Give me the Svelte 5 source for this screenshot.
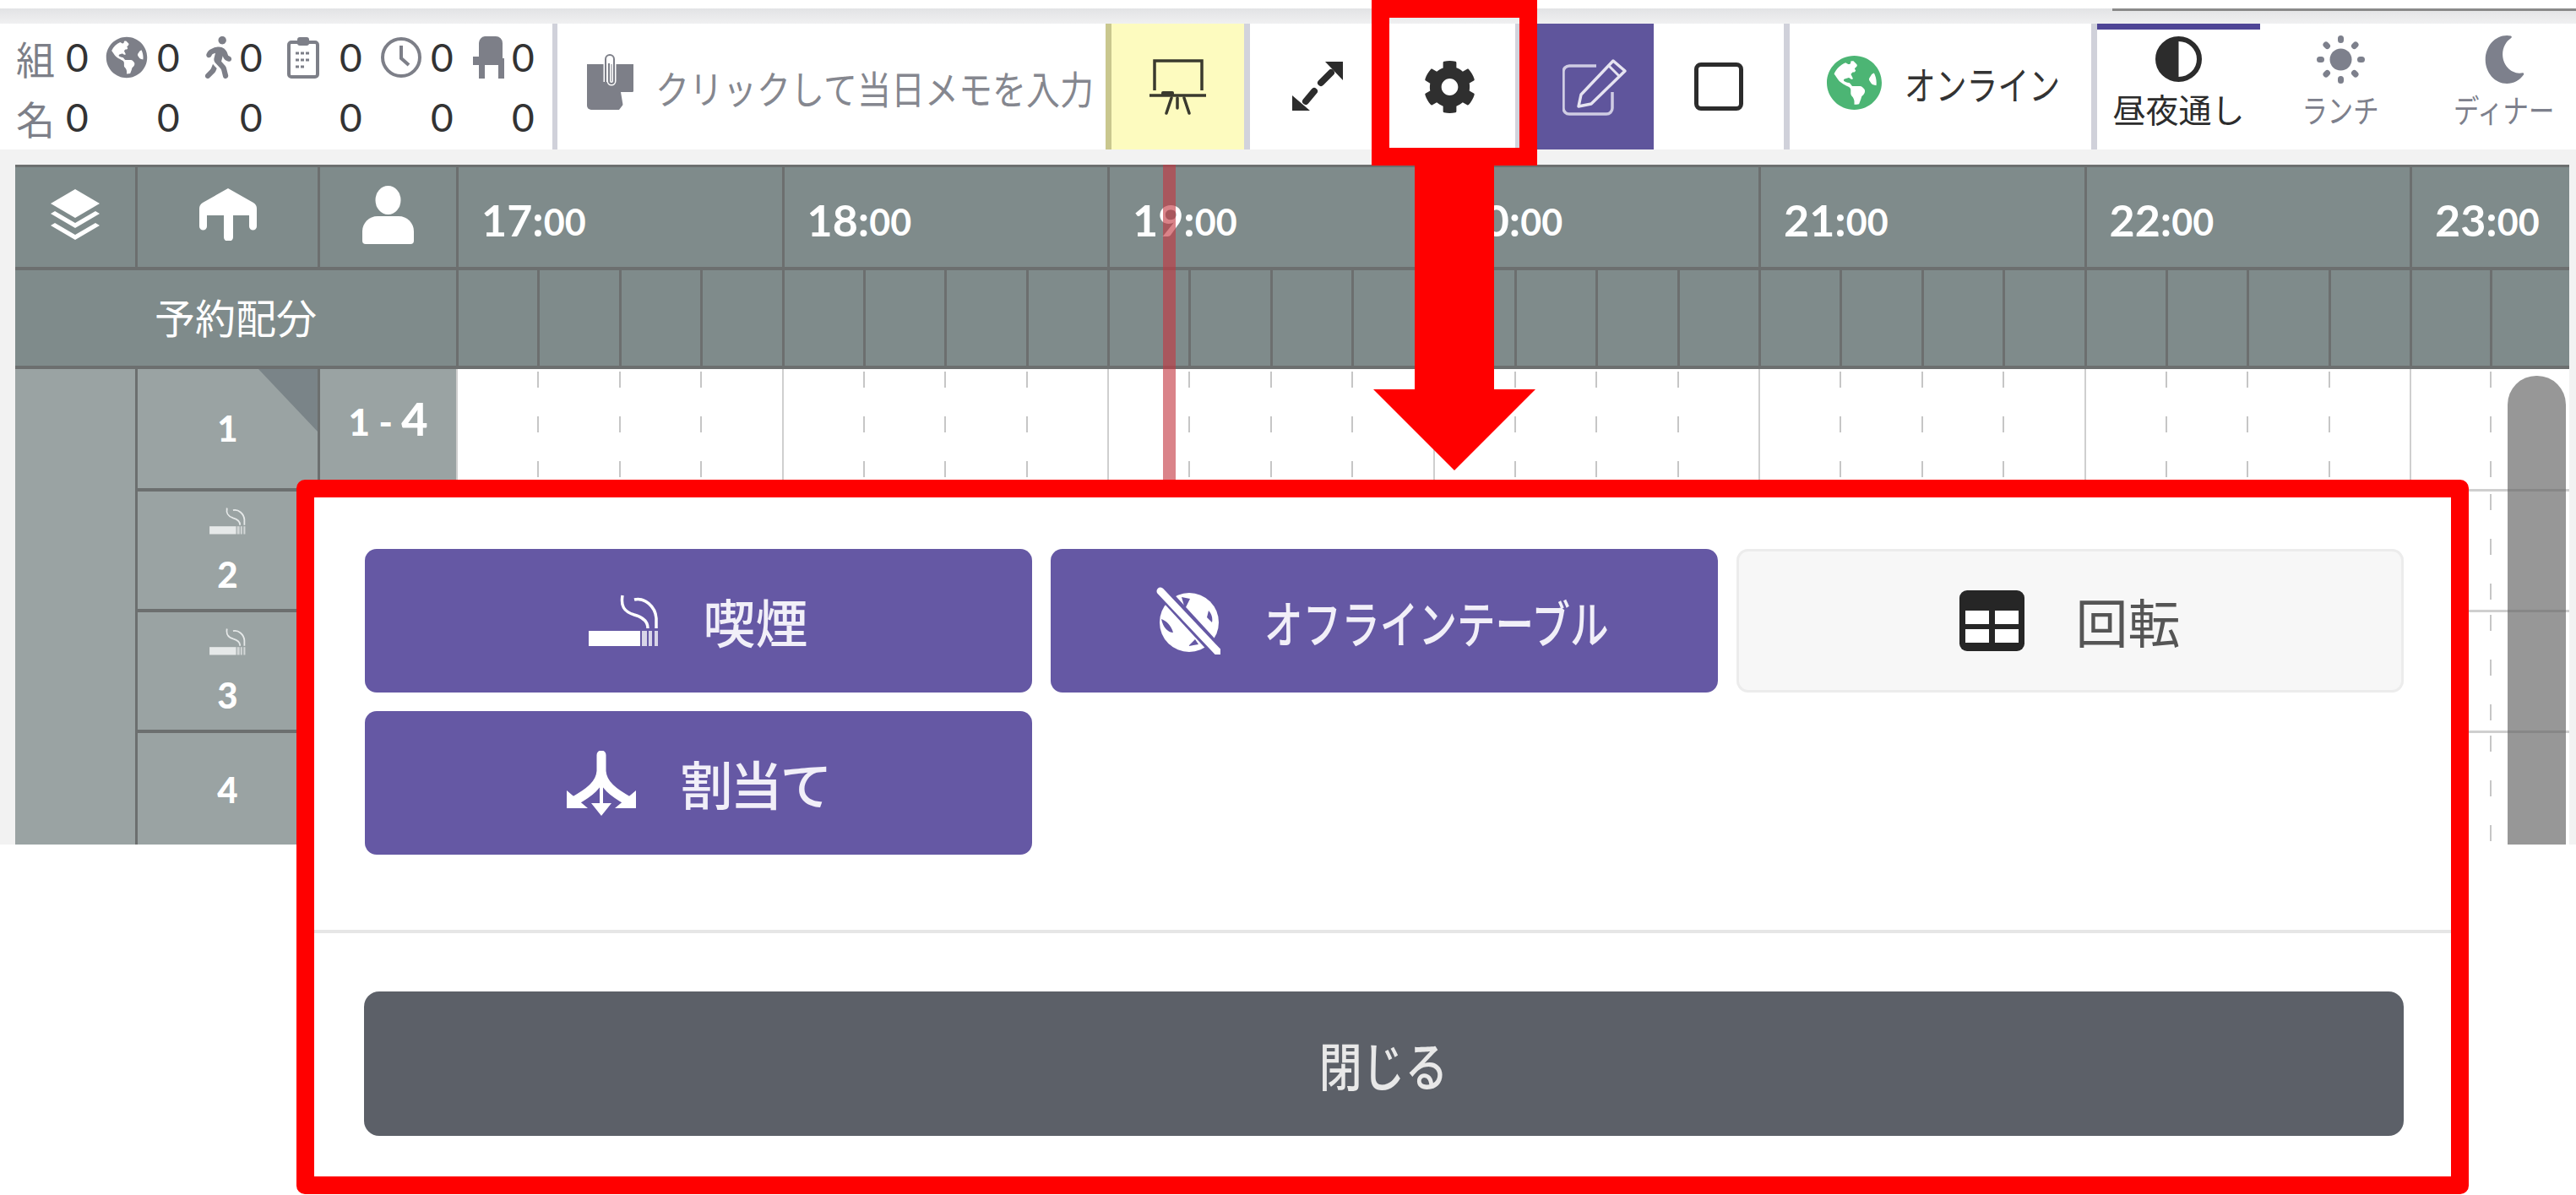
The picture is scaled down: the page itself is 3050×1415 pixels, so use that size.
<script>
  const globe = "M248 8C111.03 8 0 119.03 0 256s111.03 248 248 248 248-111.03 248-248S384.97 8 248 8zm82.29 357.6c-3.9 3.88-7.99 7.95-11.31 11.28-2.99 3-5.1 6.7-6.17 10.71-1.51 5.66-2.73 11.38-4.77 16.87l-17.39 46.85c-13.76 3-28 4.69-42.65 4.69v-27.38c1.69-12.62-7.64-36.26-22.63-51.25-6-6-9.37-14.14-9.37-22.63v-32.01c0-11.64-6.27-22.34-16.46-27.97-14.37-7.95-34.81-19.06-48.81-26.11-11.48-5.78-22.1-13.14-31.65-21.75l-.8-.72a114.792 114.792 0 0 1-18.06-20.74c-9.38-13.77-24.66-36.42-34.59-51.14 20.47-45.5 57.36-82.04 103.2-101.89l24.01 12.01C203.48 89.74 216 82.01 216 70.11v-11.3c7.99-1.29 16.12-2.11 24.42-2.43l28.3 28.3c6.25 6.25 6.25 16.38 0 22.63L264 112l-10.34 10.34c-3.12 3.12-3.12 8.19 0 11.31l4.69 4.69c3.12 3.12 3.12 8.19 0 11.31l-8 8a8.008 8.008 0 0 1-5.66 2.34h-8.99c-2.08 0-4.08.81-5.58 2.27l-9.92 9.65a8.008 8.008 0 0 0-1.58 9.31l15.59 31.19c2.66 5.32-1.21 11.58-7.15 11.58h-5.64c-1.93 0-3.79-.7-5.24-1.96l-9.28-8.06a16.017 16.017 0 0 0-15.55-3.1l-31.17 10.39a11.95 11.95 0 0 0-8.17 11.34c0 4.53 2.56 8.66 6.61 10.69l11.08 5.54c9.41 4.71 19.79 7.16 30.31 7.16s22.59 27.29 32 32h66.75c8.49 0 16.62 3.37 22.63 9.37l13.69 13.69a30.503 30.503 0 0 1 8.93 21.57 46.536 46.536 0 0 1-13.72 32.98zM417 274.25c-5.79-1.45-10.84-5-14.15-9.97l-17.98-26.97a23.97 23.97 0 0 1 0-26.62l19.59-29.38c2.32-3.47 5.5-6.29 9.24-8.15l12.98-6.49C440.2 193.59 448 223.87 448 256c0 8.67-.74 17.16-1.82 25.54L417 274.25z";
  const walker = "M208 96c26.5 0 48-21.5 48-48S234.5 0 208 0s-48 21.5-48 48 21.5 48 48 48zm94.5 149.1l-23.3-11.8-9.7-29.4c-14.7-44.6-55.7-75.8-102.2-75.9-36-.1-55.9 10.1-93.3 25.2-21.6 8.7-39.3 25.2-49.7 46.2L17.6 213c-7.8 15.8-1.5 35 14.2 42.9 15.6 7.9 34.6 1.5 42.5-14.3L81 228c3.5-7 9.3-12.5 16.5-15.4l26.8-10.8-15.2 60.7c-5.2 20.8.4 42.9 14.9 58.8l59.9 65.4c7.2 7.9 12.3 17.4 14.9 27.7l18.3 73.3c4.3 17.1 21.7 27.6 38.8 23.3 17.1-4.3 27.6-21.7 23.3-38.8l-22.2-89c-2.6-10.3-7.7-19.9-14.9-27.7l-45.5-49.7 17.2-68.7 5.5 16.5c5.3 16.1 16.7 29.4 31.7 37l23.3 11.8c15.6 7.9 34.6 1.5 42.5-14.3 7.7-15.7 1.4-35.1-14.3-43zM73.6 385.8c-3.2 8.1-8 15.4-14.2 21.5l-50 50.1c-12.5 12.5-12.5 32.8 0 45.3s32.7 12.5 45.2 0l59.4-59.4c6.1-6.1 10.9-13.4 14.2-21.5l13.5-33.8c-55.3-60.3-38.7-41.8-47.4-53.7l-20.7 51.5z";
  const cog = "M487.4 315.7l-42.6-24.6c4.3-23.2 4.3-47 0-70.2l42.6-24.6c4.9-2.8 7.1-8.6 5.5-14-11.1-35.6-30-67.8-54.7-94.6-3.8-4.1-10-5.1-14.8-2.3L380.8 110c-17.9-15.4-38.5-27.3-60.8-35.1V25.8c0-5.6-3.9-10.5-9.4-11.7-36.7-8.2-74.3-7.8-109.2 0-5.5 1.2-9.4 6.1-9.4 11.7V75c-22.2 7.9-42.8 19.8-60.8 35.1L88.7 85.5c-4.9-2.8-11-1.9-14.8 2.3-24.7 26.7-43.6 58.9-54.7 94.6-1.7 5.4.6 11.2 5.5 14L67.3 221c-4.3 23.2-4.3 47 0 70.2l-42.6 24.6c-4.9 2.8-7.1 8.6-5.5 14 11.1 35.6 30 67.8 54.7 94.6 3.8 4.1 10 5.1 14.8 2.3l42.6-24.6c17.9 15.4 38.5 27.3 60.8 35.1v49.2c0 5.6 3.9 10.5 9.4 11.7 36.7 8.2 74.3 7.8 109.2 0 5.5-1.2 9.4-6.1 9.4-11.7v-49.2c22.2-7.9 42.8-19.8 60.8-35.1l42.6 24.6c4.9 2.8 11 1.9 14.8-2.3 24.7-26.7 43.6-58.9 54.7-94.6 1.5-5.5-.7-11.3-5.6-14.1zM256 336c-44.1 0-80-35.9-80-80s35.9-80 80-80 80 35.9 80 80-35.9 80-80 80z";
  const moon = "M283.211 512c78.962 0 151.079-35.925 198.857-94.792 7.068-8.708-.639-21.43-11.562-19.35-124.203 23.654-238.262-71.576-238.262-196.954 0-72.222 38.662-138.635 101.498-174.394 9.686-5.512 7.25-20.197-3.756-22.23A258.156 258.156 0 0 0 283.211 0c-141.309 0-256 114.511-256 256 0 141.309 114.511 256 256 256z";

  const hours = ['17', '18', '19', '20', '21', '22', '23'];
  const rows = [
    { no: 1, smoke: false, h: 145 },
    { no: 2, smoke: true, h: 143 },
    { no: 3, smoke: true, h: 143 },
    { no: 4, smoke: false, h: 140 },
  ];
  // last hour is cut off at the right edge, only 2 quarters fit
  const quarters = (i) => (i === hours.length - 1 ? [0, 1] : [0, 1, 2, 3]);
</script>

{#snippet smokeIcon(w, h)}
  <svg width={w} height={h} viewBox="0 0 83 62">
    <rect x="0" y="43" width="61" height="18" fill="currentColor" />
    <g fill="currentColor" opacity="0.75">
      <rect x="63" y="43" width="6" height="18" />
      <rect x="71" y="43" width="4" height="18" />
      <rect x="78" y="43" width="4" height="18" />
    </g>
    <path d="M40 1c-2 12 1 19 14 23 11 3 16 8 16 16M54 6c12-3 25 8 26 22v12" fill="none" stroke="currentColor" stroke-width="3.5" />
  </svg>
{/snippet}

<div class="page">
  <div class="topband"><span class="topline"></span></div>

  <header class="toolbar">
    <div class="stats">
      <span class="lbl">組</span><span class="num">0</span>
      <span class="ic"><svg width="50" height="50" viewBox="0 0 496 512"><path d={globe} fill="#7d7f88" /></svg></span><span class="num">0</span>
      <span class="ic"><svg width="33" height="50" viewBox="0 0 320 512"><path d={walker} fill="#7d7f88" /></svg></span><span class="num">0</span>
      <span class="ic"><svg width="38" height="50" viewBox="0 0 38 50">
        <rect x="2" y="7" width="34" height="41" rx="3" fill="none" stroke="#7d7f88" stroke-width="4" />
        <rect x="12" y="1" width="14" height="10" rx="3" fill="#7d7f88" />
        <path d="M10 20h18M10 28h18M10 36h12" stroke="#7d7f88" stroke-width="3" stroke-dasharray="4 2" />
      </svg></span><span class="num">0</span>
      <span class="ic"><svg width="50" height="50" viewBox="0 0 50 50">
        <circle cx="25" cy="25" r="22" fill="none" stroke="#7d7f88" stroke-width="4" />
        <path d="M25 11v15l9 8" fill="none" stroke="#7d7f88" stroke-width="4" />
      </svg></span><span class="num">0</span>
      <span class="ic"><svg width="37" height="50" viewBox="0 0 37 50">
        <path d="M14 0h13a8 8 0 0 1 8 8v18h2v24h-7V34H14v16H7V34H0V24h7V8a8 8 0 0 1 7-8z" fill="#7d7f88" />
      </svg></span><span class="num">0</span>

      <span class="lbl">名</span><span class="num">0</span>
      <span></span><span class="num">0</span>
      <span></span><span class="num">0</span>
      <span></span><span class="num">0</span>
      <span></span><span class="num">0</span>
      <span></span><span class="num">0</span>
    </div>

    <div class="memo">
      <svg width="55" height="67" viewBox="0 0 55 67">
        <path d="M0 13h55v32L38 67H5a5 5 0 0 1-5-5z" fill="#7d7f88" />
        <path d="M40 46h15L43 64z" fill="#fff" />
        <path d="M22 34V7a5 5 0 0 1 10 0v26a3 3 0 0 1-6 0V12" fill="none" stroke="#fff" stroke-width="5" />
        <path d="M22 34V7a5 5 0 0 1 10 0v26a3 3 0 0 1-6 0V12" fill="none" stroke="#7d7f88" stroke-width="2" />
      </svg>
      <span class="memotext">クリックして当日メモを入力</span>
    </div>

    <div class="tool yellow">
      <svg width="67" height="66" viewBox="0 0 67 66">
        <path d="M6 37V2h56v35" fill="none" stroke="#3a3a2e" stroke-width="3.5" />
        <path d="M0 43h67" stroke="#3a3a2e" stroke-width="3.5" />
        <rect x="14" y="38" width="15" height="5" rx="2" fill="#3a3a2e" />
        <path d="M26 46l-6 18M33 46v12M41 46l6 18" fill="none" stroke="#3a3a2e" stroke-width="3.5" stroke-linecap="round" />
      </svg>
    </div>

    <div class="tool expand">
      <svg width="60" height="60" viewBox="0 0 60 60">
        <path d="M39 0h21v22zM0 40v18h21z" fill="#2c2c2c" />
        <path d="M46 13L34 25M26 35L16 47" stroke="#2c2c2c" stroke-width="8" stroke-linecap="round" />
      </svg>
    </div>

    <div class="tool gear">
      <svg width="63" height="64" viewBox="0 0 512 512" preserveAspectRatio="none"><path d={cog} fill="#2f2f2f" /></svg>
    </div>

    <div class="tool purple">
      <svg width="78" height="68" viewBox="0 0 78 68">
        <path d="M40 9H8a7 7 0 0 0-7 7v43a7 7 0 0 0 7 7h44a7 7 0 0 0 7-7V40" fill="none" stroke="#cfcce3" stroke-width="3.5" />
        <path d="M19 57l3-14L60 3l14 12-40 39z" fill="#5f559c" stroke="#e6e4f1" stroke-width="3.5" stroke-linejoin="round" />
        <path d="M55 9l12 12" stroke="#e6e4f1" stroke-width="3" />
      </svg>
    </div>

    <div class="tool square"><span class="box"></span></div>

    <div class="online">
      <svg width="65" height="66" viewBox="0 0 496 512" preserveAspectRatio="none"><path d={globe} fill="#4cb574" /></svg>
      <span class="onlinetext">オンライン</span>
    </div>

    <div class="tabs">
      <div class="tab active">
        <svg width="55" height="54" viewBox="0 0 55 54">
          <ellipse cx="27.5" cy="27" rx="24.5" ry="24" fill="#fff" stroke="#2c2c2c" stroke-width="6" />
          <path d="M27.5 3a24.5 24 0 0 0 0 48z" fill="#2c2c2c" />
        </svg>
        <span>昼夜通し</span>
      </div>
      <div class="tab">
        <svg width="57" height="57" viewBox="0 0 57 57">
          <circle cx="28.5" cy="28.5" r="13" fill="#7d808c" />
          <g stroke="#7d808c" stroke-width="7" stroke-linecap="round">
            <path d="M28.5 3.5v2M28.5 51.5v2M3.5 28.5h2M51.5 28.5h2M11 11l1.5 1.5M46 11l-1.5 1.5M11 46l1.5-1.5M46 46l-1.5-1.5" />
          </g>
        </svg>
        <span class="small">ランチ</span>
      </div>
      <div class="tab">
        <svg width="51" height="57" viewBox="0 0 512 512" preserveAspectRatio="none"><path d={moon} fill="#7d808c" /></svg>
        <span class="small">ディナー</span>
      </div>
    </div>
  </header>

  <main class="sheet">
    <div class="headrow times">
      <div class="hc"><svg width="60" height="60" viewBox="0 0 60 60" fill="#fff">
        <path d="M30 0l29 17-29 17L1 17z" />
        <path d="M6 26l24 14 24-14 5 3-29 17L1 29z" />
        <path d="M6 40l24 14 24-14 5 3-29 17L1 43z" />
      </svg></div>
      <div class="hc"><svg width="68" height="62" viewBox="0 0 68 62" fill="#fff">
        <path d="M34 0l30 17c3 2 4 4 4 7v21a4.5 4.5 0 0 1-9 0V32H40v26a5.500 5 0 0 1-11 0V32H9v13a4.500 4.500 0 0 1-9 0V24c0-3 1-5 4-7z" />
      </svg></div>
      <div class="hc"><svg width="61" height="69" viewBox="0 0 61 69" fill="#fff">
        <ellipse cx="30.5" cy="17" rx="15" ry="17" />
        <path d="M18 36h25c10 0 18 8 18 18v11a4 4 0 0 1-4 4H4a4 4 0 0 1-4-4V54c0-10 8-18 18-18z" />
      </svg></div>
      {#each hours as h, i}
        <div class="time" class:cut={i === hours.length - 1}>
          <span class="hh">{h}:</span><span class="mm">00</span>
        </div>
      {/each}
    </div>

    <div class="headrow subs">
      <div class="alloc">予約配分</div>
      {#each hours as h, i}
        <div class="subhour" class:cut={i === hours.length - 1}>
          {#each quarters(i) as q}<span class="subq"></span>{/each}
        </div>
      {/each}
    </div>

    <div class="body">
      <div class="groupcol"></div>
      <div class="rowlist">
        {#each rows as r}
          <div class="row" style="height: {r.h}px">
            <div class="no" class:corner={r.no === 1}>
              {#if r.smoke}
                <span class="smk">{@render smokeIcon(47, 32)}</span>
              {/if}
              <span>{r.no}</span>
            </div>
            <div class="cover">
              {#if r.no === 1}<span>1 - <b>4</b></span>{/if}
            </div>
            <div class="track">
              {#each hours as h, i}
                <div class="trackhour" class:cut={i === hours.length - 1}>
                  {#each quarters(i) as q}<span class="tq"></span>{/each}
                </div>
              {/each}
            </div>
          </div>
        {/each}
      </div>
      <div class="scrollbar"></div>
    </div>
    <div class="nowline"></div>
  </main>

  <!-- annotation: red frame round the gear + arrow down to the dialog -->
  <div class="gearframe"></div>
  <div class="stem"></div>
  <div class="head"></div>

  <section class="dialog">
    <div class="btns">
      <button class="opt on">
        <span class="smkbig">{@render smokeIcon(83, 62)}</span>
        <span class="big">喫煙</span>
      </button>
      <button class="opt on">
        <svg width="76" height="80" viewBox="0 0 76 80">
          <circle cx="39" cy="42" r="35" fill="#fff" />
          <path d="M30 12l10 2-6 12zM62 28c4 4 5 10 4 14l-6-6zM6 38c6 2 12 8 14 16-6 0-12-6-14-16zM38 70l8-8 4 6z" fill="#6558a4" />
          <path d="M5 3l68 74" stroke="#6558a4" stroke-width="16" />
          <path d="M5 5l68 72" stroke="#fff" stroke-width="9" stroke-linecap="round" />
        </svg>
        <span class="thin">オフラインテーブル</span>
      </button>
      <button class="opt off">
        <svg width="77" height="72" viewBox="0 0 77 72">
          <rect width="77" height="72" rx="9" fill="#262626" />
          <rect x="7" y="24" width="28" height="16" fill="#fff" />
          <rect x="42" y="24" width="28" height="16" fill="#fff" />
          <rect x="7" y="46" width="28" height="16" fill="#fff" />
          <rect x="42" y="46" width="28" height="16" fill="#fff" />
        </svg>
        <span class="big plain">回転</span>
      </button>
      <button class="opt on">
        <svg width="82" height="77" viewBox="0 0 82 77">
          <path d="M41 5v24M41 24C40 40 26 50 8 60M41 24C42 40 56 50 74 60" fill="none" stroke="#fff" stroke-width="11" stroke-linecap="round" />
          <path d="M41 34v30" stroke="#fff" stroke-width="4" />
          <path d="M29 62h24L41 77zM0 47v21h25zM82 47v21H57z" fill="#fff" />
        </svg>
        <span class="big tight">割当て</span>
      </button>
    </div>
    <div class="foot">
      <button class="close"><span>閉じる</span></button>
    </div>
  </section>
</div>

<style>
  :global(body) {
    margin: 0;
    background: #fff;
  }
  .page {
    position: relative;
    width: 3050px;
    height: 1415px;
    overflow: hidden;
    padding-top: 10px;
    box-sizing: border-box;
    font-family: "Lato", "Noto Sans CJK JP", sans-serif;
    background: #fff;
  }
  svg {
    flex: none;
  }
  .topband {
    position: relative;
    height: 18px;
    background: linear-gradient(#e2e3e5, #f0f0f1);
  }
  .topline {
    position: absolute;
    left: 2501px;
    right: 0;
    top: 0;
    height: 3px;
    background: #8a8a8a;
  }

  /* toolbar */
  .toolbar {
    display: flex;
    height: 149px;
    background: #fff;
  }
  .stats {
    flex: none;
    width: 660px;
    box-sizing: border-box;
    padding: 4px 0 0 19px;
    border-right: 6px solid #d0d1da;
    display: grid;
    grid-template-columns: 59px 47px 61px 56px 42px 56px 62px 48px 60px 50px 46px 30px;
    grid-template-rows: 71px 71px;
    align-items: center;
    font-size: 46px;
    color: #333;
  }
  .lbl {
    color: #7d7f88;
  }
  .num {
    line-height: 1;
  }
  .ic {
    display: flex;
  }
  .memo {
    flex: none;
    width: 649px;
    box-sizing: border-box;
    padding-left: 35px;
    display: flex;
    align-items: center;
    gap: 26px;
    color: #85878f;
    white-space: nowrap;
  }
  .memo svg {
    margin-bottom: 12px;
  }
  .memotext {
    font-size: 46px;
    transform: scaleX(0.87);
    transform-origin: left center;
  }
  .tool {
    flex: none;
    display: flex;
    align-items: center;
    justify-content: center;
    box-sizing: border-box;
  }
  .yellow {
    width: 171px;
    background: #fdfbbf;
    border-left: 7px solid #c9c78e;
    border-right: 7px solid #d2d3dc;
  }
  .expand {
    width: 159px;
  }
  .gear {
    width: 160px;
    border-right: 5px solid #d2d3dc;
  }
  .purple {
    width: 138px;
    margin-left: 21px;
    background: #5f559c;
  }
  .square {
    width: 154px;
  }
  .box {
    width: 58px;
    height: 57px;
    box-sizing: border-box;
    border: 5px solid #2c2c2c;
    border-radius: 8px;
  }
  .online {
    flex: none;
    width: 364px;
    box-sizing: border-box;
    border-left: 7px solid #d0d1da;
    padding: 0 0 10px 44px;
    display: flex;
    align-items: center;
    gap: 27px;
    color: #333;
    white-space: nowrap;
  }
  .onlinetext {
    font-size: 46px;
    transform: scaleX(0.8);
    transform-origin: left center;
  }
  .tabs {
    flex: none;
    display: flex;
    border-left: 7px solid #d0d1da;
  }
  .tab {
    flex: none;
    width: 190px;
    box-sizing: border-box;
    padding-top: 14px;
    display: flex;
    flex-direction: column;
    align-items: center;
    color: #7d808c;
    white-space: nowrap;
    line-height: 52px;
    font-size: 39px;
  }
  .tab svg {
    margin-bottom: 5px;
  }
  .tab:last-child {
    width: 198px;
  }
  .small {
    transform: scaleX(0.8);
    font-size: 38px;
  }
  .tab.active {
    width: 193px;
    border-top: 7px solid #4f4596;
    padding-top: 8px;
    color: #2c2c2c;
  }
  .tab.active svg {
    margin-bottom: 7px;
  }

  /* table */
  .sheet {
    position: relative;
    height: 823px;
    overflow: hidden;
    padding: 18px 8px 0 18px;
    box-sizing: border-box;
    background: #f2f2f2;
  }
  .headrow {
    display: grid;
    grid-template-columns: 142px 216px 164px repeat(6, 385.5px) 189px;
    background: #7f8b8b;
    color: #fff;
    box-sizing: border-box;
  }
  .times {
    height: 125px;
    border-top: 3px solid #6c6f6f;
    border-bottom: 4px solid #6c6f6f;
  }
  .subs {
    height: 117px;
    border-bottom: 4px solid #6c6f6f;
  }
  .hc {
    display: flex;
    align-items: center;
    justify-content: center;
    border-left: 3px solid #6c6f6f;
    padding-bottom: 6px;
  }
  .hc:first-child {
    border-left: 0;
  }
  .time {
    display: flex;
    align-items: center;
    border-left: 3px solid #6c6f6f;
    padding: 6px 0 0 27px;
    font-weight: 700;
    white-space: nowrap;
    overflow: hidden;
  }
  .hh {
    font-size: 52px;
  }
  .mm {
    font-size: 43px;
    padding-top: 5px;
  }
  .alloc {
    grid-column: span 3;
    display: flex;
    align-items: center;
    justify-content: center;
    font-size: 48px;
    padding-bottom: 6px;
  }
  .subhour {
    display: grid;
    grid-template-columns: repeat(4, 1fr);
  }
  .subhour.cut,
  .trackhour.cut {
    grid-template-columns: repeat(2, 1fr);
  }
  .subq {
    border-left: 3px solid #6c6f6f;
  }

  .body {
    position: relative;
    display: flex;
    height: 563px;
    overflow: hidden;
  }
  .groupcol {
    flex: none;
    width: 142px;
    background: #9aa3a3;
  }
  .rowlist {
    flex: 1;
  }
  .row {
    display: flex;
    box-sizing: border-box;
  }
  .no,
  .cover {
    flex: none;
    box-sizing: border-box;
    display: flex;
    flex-direction: column;
    align-items: center;
    justify-content: center;
    gap: 26px;
    background: #9aa3a3;
    border-left: 3px solid #6c6f6f;
    border-bottom: 4px solid #6c6f6f;
    color: #fff;
    font-weight: 900;
    font-size: 42px;
    line-height: 1;
  }
  .no {
    width: 216px;
    position: relative;
    padding-bottom: 2px;
  }
  .no.corner::after {
    content: "";
    position: absolute;
    right: 0;
    top: 0;
    width: 70px;
    height: 74px;
    background: #7a8488;
    clip-path: polygon(0 0, 100% 0, 100% 100%);
  }
  .smk {
    display: flex;
    color: #e6e9e9;
  }
  .cover {
    width: 164px;
    padding-bottom: 24px;
    font-size: 44px;
  }
  .cover b {
    font-size: 54px;
    font-weight: 900;
  }
  .track {
    flex: 1;
    display: grid;
    grid-template-columns: repeat(6, 385.5px) 189px;
    background: #fff;
    box-sizing: border-box;
    border-bottom: 3px solid #cfcfcf;
  }
  .trackhour {
    display: grid;
    grid-template-columns: repeat(4, 1fr);
  }
  .tq {
    background: repeating-linear-gradient(to bottom, transparent 0 3px, #c6c6c6 3px 22px, transparent 22px 53px) left top / 2px 100% no-repeat;
  }
  .tq:first-child {
    background: linear-gradient(#cfcfcf, #cfcfcf) left top / 2px 100% no-repeat;
  }
  .scrollbar {
    position: absolute;
    right: 4px;
    top: 8px;
    bottom: 0;
    width: 69px;
    border-radius: 34px 34px 0 0;
    background: rgba(100, 100, 100, 0.67);
  }
  .nowline {
    position: absolute;
    left: 1377px;
    top: 18px;
    width: 15px;
    height: 400px;
    background: rgba(195, 55, 65, 0.62);
  }

  /* red annotation */
  .gearframe {
    position: absolute;
    left: 1624px;
    top: 0;
    width: 196px;
    height: 196px;
    box-sizing: border-box;
    border: 21px solid #ff0000;
  }
  .stem {
    position: absolute;
    left: 1675px;
    top: 196px;
    width: 94px;
    height: 266px;
    background: #ff0000;
  }
  .head {
    position: absolute;
    left: 1626px;
    top: 461px;
    width: 192px;
    height: 96px;
    background: #ff0000;
    clip-path: polygon(0 0, 100% 0, 50% 100%);
  }

  /* dialog */
  .dialog {
    position: absolute;
    left: 351px;
    top: 568px;
    width: 2572px;
    height: 846px;
    box-sizing: border-box;
    border: 21px solid #ff0000;
    border-radius: 10px;
    background: #fff;
    display: flex;
    flex-direction: column;
  }
  .btns {
    height: 516px;
    box-sizing: border-box;
    padding: 61px 56px 0 60px;
    display: grid;
    grid-template-columns: repeat(3, 1fr);
    grid-template-rows: 170px 170px;
    gap: 22px;
    border-bottom: 4px solid #e6e6e6;
  }
  button {
    font-family: inherit;
    border: 0;
    padding: 0;
  }
  .opt {
    display: flex;
    align-items: center;
    justify-content: center;
    gap: 52px;
    border-radius: 14px;
    white-space: nowrap;
  }
  .on {
    background: #6558a4;
    color: #f1eff8;
  }
  .off {
    background: #f7f7f7;
    box-shadow: inset 0 0 0 3px #ececec;
    color: #555;
  }
  .smkbig {
    display: flex;
    color: #fff;
  }
  .big {
    font-size: 62px;
    font-weight: 500;
  }
  .tight {
    letter-spacing: -3px;
  }
  .plain {
    font-weight: 400;
    margin-left: 8px;
  }
  .thin {
    font-size: 60px;
    font-weight: 500;
    transform: scaleX(0.76);
    transform-origin: left center;
    margin-right: -124px;
  }
  .foot {
    padding: 69px 56px 0 59px;
  }
  .close {
    display: block;
    width: 100%;
    height: 171px;
    background: #5c6068;
    color: #e8e8e8;
    border-radius: 18px;
    font-size: 62px;
    font-weight: 500;
  }
  .close span {
    display: inline-block;
    transform: scaleX(0.82);
  }
</style>
